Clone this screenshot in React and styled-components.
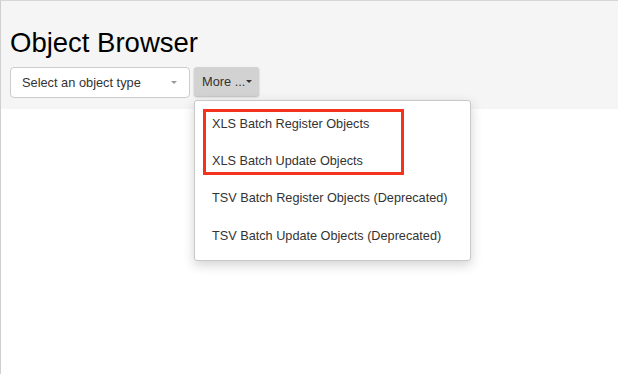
// Libraries.
import styled, { createGlobalStyle } from "styled-components";

// Styles.
const GlobalStyle = createGlobalStyle`
 html, body {
  margin: 0;
  padding: 0;
  background: #fff;
 }

 body {
  font-family: "Liberation Sans", Arial, sans-serif;
  color: #333;
 }
`;

const StyledPage = styled.div`
 min-height: 374px;
 box-sizing: border-box;
 border-top: 1px solid #d6d6d6;
 border-left: 1px solid #cfcfcf;
`;

const StyledHeader = styled.header`
 background-color: #f5f5f5;
 padding: 25px 9px 11px;

 & h1 {
  margin: 0 0 7px;
  font-size: 27.5px;
  font-weight: 400;
  line-height: 34px;
  color: #000;
 }
`;

const StyledToolbar = styled.div`
 display: flex;
 align-items: flex-start;
 gap: 4px;
`;

const StyledSelect = styled.div`
 display: flex;
 align-items: center;
 justify-content: space-between;
 box-sizing: border-box;
 width: 180px;
 height: 31px;
 padding: 0 12px 0 11px;
 background-color: #fff;
 border: 1px solid #ccc;
 border-radius: 4px;
 font-size: 12.8px;
 color: #333;
`;

const Caret = styled.span`
 width: 0;
 height: 0;
 border-left: ${({ $size }) => $size}px solid transparent;
 border-right: ${({ $size }) => $size}px solid transparent;
 border-top: ${({ $size }) => $size}px solid ${({ $color }) => $color};
`;

const StyledDropdown = styled.div`
 position: relative;
`;

const StyledButton = styled.button`
 display: flex;
 align-items: center;
 gap: 1px;
 box-sizing: border-box;
 height: 29px;
 padding: 0 7px 0 8px;
 background-color: #d2d2d2;
 border: none;
 border-radius: 3px;
 box-shadow: 0 1px 2px rgba(0, 0, 0, 0.25);
 font-family: inherit;
 font-size: 12.8px;
 color: #333;
`;

const StyledMenu = styled.ul`
 position: absolute;
 top: 33px;
 left: 0;
 box-sizing: border-box;
 width: 277px;
 height: 161px;
 margin: 0;
 padding: 8px 0 0;
 list-style: none;
 background-color: #fff;
 border: 1px solid #c8c8c8;
 border-radius: 3px;
 box-shadow: 0 4px 12px rgba(0, 0, 0, 0.18);
 z-index: 5;
`;

const StyledHighlight = styled.li`
 box-sizing: border-box;
 width: 201px;
 margin: 0 0 4px 8px;
 padding: 1px 6px 0;
 display: flex;
 flex-direction: column;
 gap: 15px;
 border: 3px solid #f3331d;
`;

const StyledItem = styled.div`
 font-size: 12.7px;
 line-height: ${({ $tall }) => ($tall ? "38px" : "22px")};
 padding-left: ${({ $tall }) => ($tall ? "17px" : "0")};
 color: #333;
 white-space: nowrap;
`;

export default function App() {
 return (
  <>
   <GlobalStyle />
   <StyledPage>
    <StyledHeader>
     <h1>Object Browser</h1>

     <StyledToolbar>
      <StyledSelect>
       <span>Select an object type</span>
       <Caret $size={3} $color="#999" />
      </StyledSelect>

      <StyledDropdown>
       <StyledButton>
        <span>More ...</span>
        <Caret $size={3} $color="#333" />
       </StyledButton>

       <StyledMenu>
        <StyledHighlight>
         <StyledItem>XLS Batch Register Objects</StyledItem>
         <StyledItem>XLS Batch Update Objects</StyledItem>
        </StyledHighlight>
        <li>
         <StyledItem $tall>TSV Batch Register Objects (Deprecated)</StyledItem>
        </li>
        <li>
         <StyledItem $tall>TSV Batch Update Objects (Deprecated)</StyledItem>
        </li>
       </StyledMenu>
      </StyledDropdown>
     </StyledToolbar>
    </StyledHeader>
   </StyledPage>
  </>
 );
}
